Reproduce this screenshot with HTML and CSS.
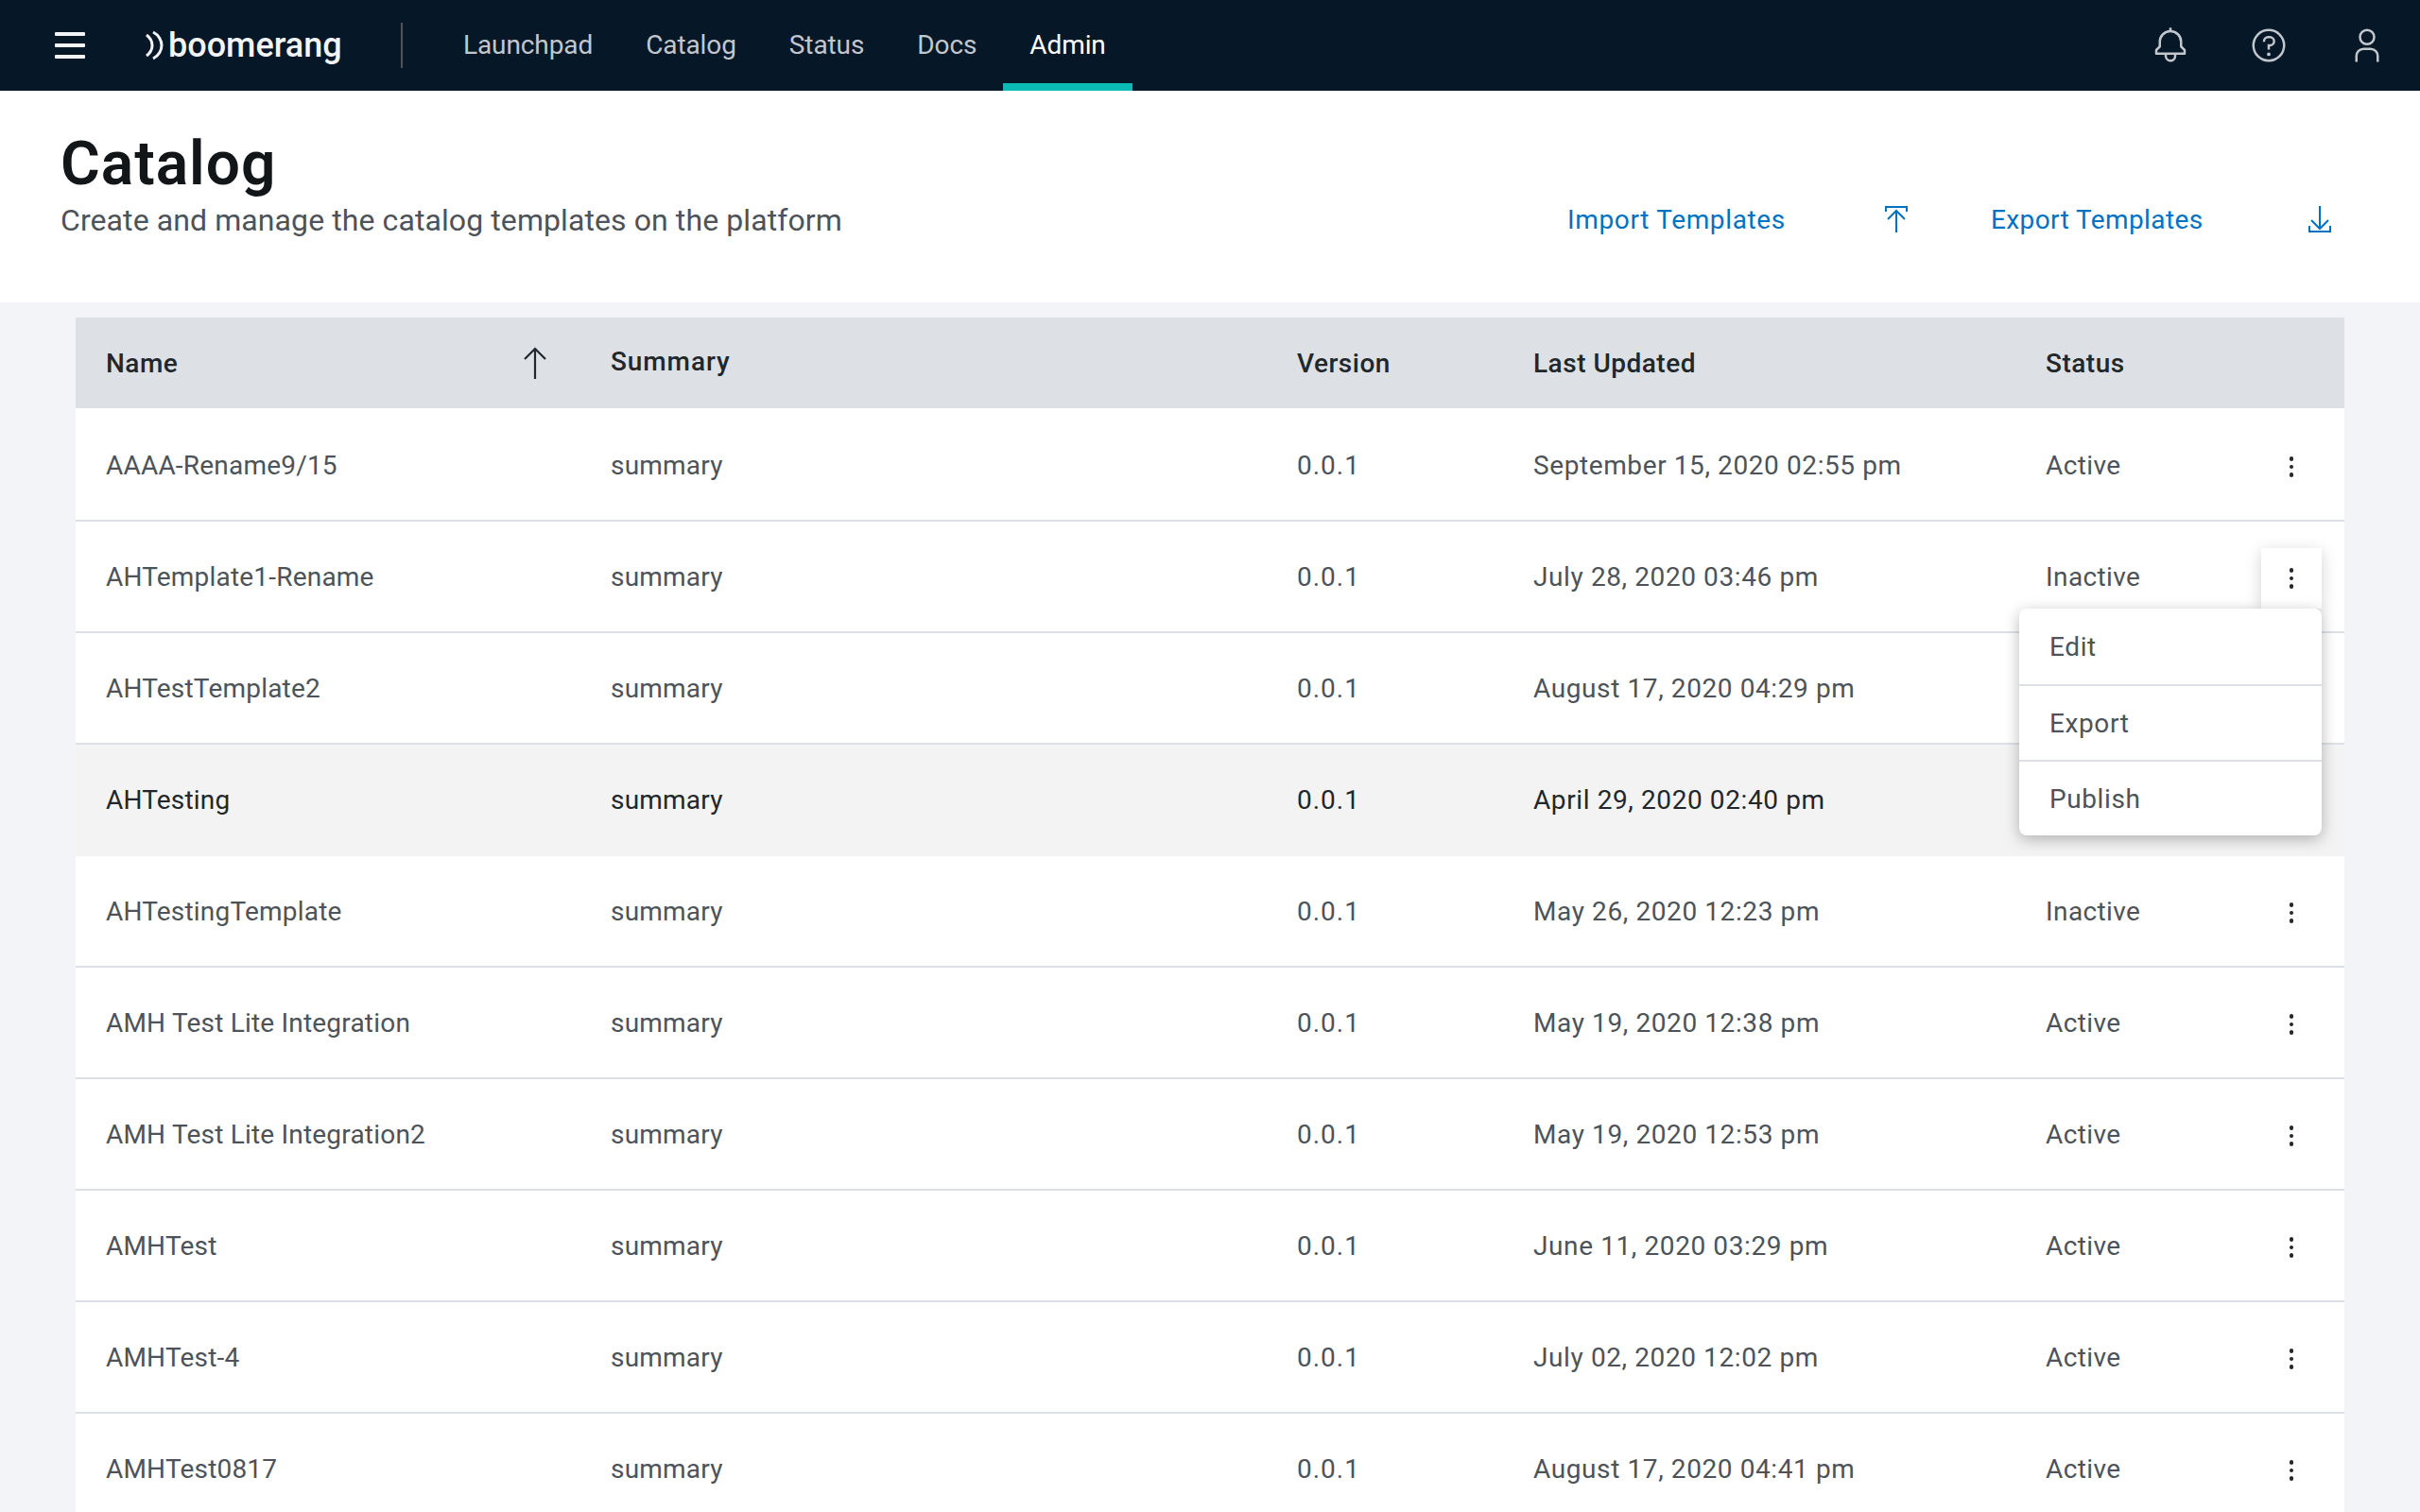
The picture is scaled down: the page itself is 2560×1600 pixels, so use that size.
FILE: index.html
```html
<!DOCTYPE html>
<html lang="en">
<head>
    <meta charset="UTF-8">
    <title>Catalog</title>
    <link rel="stylesheet" href="styles.css">
</head>
<body>
    <header class="topbar">
        <div class="burger"><span></span><span></span><span></span></div>
        <div class="logo">
            <svg class="logo-mark" viewBox="0 0 20 32"><path d="M2 5c4 3 6 7 6 11s-2 8-6 11M9 2c6 3 9 9 9 14s-3 11-9 14" fill="none" stroke="#f2f4f8" stroke-width="3"/></svg>
            <span>boomerang</span>
        </div>
        <nav class="nav">
            <a>Launchpad</a>
            <a>Catalog</a>
            <a>Status</a>
            <a>Docs</a>
            <a class="active">Admin</a>
        </nav>
        <div class="top-icons">
            <svg viewBox="0 0 32 32"><path d="M28.7071,19.293,26,16.5859V13a10.0136,10.0136,0,0,0-9-9.9492V1H15V3.0508A10.0136,10.0136,0,0,0,6,13v3.5859L3.2929,19.293A1,1,0,0,0,3,20v3a1,1,0,0,0,1,1h7v.7768a5.152,5.152,0,0,0,4.5,5.1987A5.0057,5.0057,0,0,0,21,25V24h7a1,1,0,0,0,1-1V20A1,1,0,0,0,28.7071,19.293ZM19,25a3,3,0,0,1-6,0V24h6Zm8-3H5V20.4141L7.707,17.707A1,1,0,0,0,8,17V13a8,8,0,0,1,16,0v4a1,1,0,0,0,.293.707L27,20.4141Z"/></svg>
            <svg viewBox="0 0 32 32"><path d="M16,2A14,14,0,1,0,30,16,14,14,0,0,0,16,2Zm0,26A12,12,0,1,1,28,16,12,12,0,0,1,16,28Z"/><circle cx="16" cy="23.5" r="1.5"/><path d="M17,8H15.5A4.49,4.49,0,0,0,11,12.5V13h2v-.5A2.5,2.5,0,0,1,15.5,10H17a2.5,2.5,0,0,1,0,5H15v4.5h2V17a4.5,4.5,0,0,0,0-9Z"/></svg>
            <svg viewBox="0 0 32 32"><path d="M16,4a5,5,0,1,1-5,5,5,5,0,0,1,5-5m0-2a7,7,0,1,0,7,7A7,7,0,0,0,16,2Z"/><path d="M26,30H24V25a5,5,0,0,0-5-5H13a5,5,0,0,0-5,5v5H6V25a7,7,0,0,1,7-7h6a7,7,0,0,1,7,7Z"/></svg>
        </div>
    </header>

    <section class="page-head">
        <div class="titles">
            <h1>Catalog</h1>
            <p>Create and manage the catalog templates on the platform</p>
        </div>
        <div class="head-actions">
            <a class="import">Import Templates
                <svg viewBox="0 0 24 28"><path d="M1 6V1h22v5M12 28V5M3 14l9-9 9 9" fill="none" stroke="#0072c3" stroke-width="2"/></svg>
            </a>
            <a class="export">Export Templates
                <svg viewBox="0 0 24 28"><path d="M1 21v6h22v-6M12 0v24M3 15l9 9 9-9" fill="none" stroke="#0072c3" stroke-width="2"/></svg>
            </a>
        </div>
    </section>

    <main class="content">
        <div class="table">
            <div class="row head">
                <div class="cell sort">Name
                    <svg viewBox="0 0 26 34"><path d="M13 34V2M2 13L13 2l11 11" fill="none" stroke="#21272a" stroke-width="2.2"/></svg>
                </div>
                <div class="cell summary-head">Summary</div>
                <div class="cell">Version</div>
                <div class="cell">Last Updated</div>
                <div class="cell">Status</div>
            </div>

            <div class="row">
                <div class="cell">AAAA-Rename9/15</div><div class="cell">summary</div><div class="cell">0.0.1</div>
                <div class="cell">September 15, 2020 02:55 pm</div><div class="cell">Active</div>
                <div class="actions"><button class="kebab"><i></i><i></i><i></i></button></div>
            </div>
            <div class="row">
                <div class="cell">AHTemplate1-Rename</div><div class="cell">summary</div><div class="cell">0.0.1</div>
                <div class="cell">July 28, 2020 03:46 pm</div><div class="cell">Inactive</div>
                <div class="actions">
                    <button class="kebab open"><i></i><i></i><i></i></button>
                    <ul class="menu">
                        <li>Edit</li>
                        <li>Export</li>
                        <li>Publish</li>
                    </ul>
                </div>
            </div>
            <div class="row">
                <div class="cell">AHTestTemplate2</div><div class="cell">summary</div><div class="cell">0.0.1</div>
                <div class="cell">August 17, 2020 04:29 pm</div><div class="cell"></div>
            </div>
            <div class="row hover">
                <div class="cell">AHTesting</div><div class="cell">summary</div><div class="cell">0.0.1</div>
                <div class="cell">April 29, 2020 02:40 pm</div><div class="cell"></div>
            </div>
            <div class="row after-hover">
                <div class="cell">AHTestingTemplate</div><div class="cell">summary</div><div class="cell">0.0.1</div>
                <div class="cell">May 26, 2020 12:23 pm</div><div class="cell">Inactive</div>
                <div class="actions"><button class="kebab"><i></i><i></i><i></i></button></div>
            </div>
            <div class="row">
                <div class="cell">AMH Test Lite Integration</div><div class="cell">summary</div><div class="cell">0.0.1</div>
                <div class="cell">May 19, 2020 12:38 pm</div><div class="cell">Active</div>
                <div class="actions"><button class="kebab"><i></i><i></i><i></i></button></div>
            </div>
            <div class="row">
                <div class="cell">AMH Test Lite Integration2</div><div class="cell">summary</div><div class="cell">0.0.1</div>
                <div class="cell">May 19, 2020 12:53 pm</div><div class="cell">Active</div>
                <div class="actions"><button class="kebab"><i></i><i></i><i></i></button></div>
            </div>
            <div class="row">
                <div class="cell">AMHTest</div><div class="cell">summary</div><div class="cell">0.0.1</div>
                <div class="cell">June 11, 2020 03:29 pm</div><div class="cell">Active</div>
                <div class="actions"><button class="kebab"><i></i><i></i><i></i></button></div>
            </div>
            <div class="row">
                <div class="cell">AMHTest-4</div><div class="cell">summary</div><div class="cell">0.0.1</div>
                <div class="cell">July 02, 2020 12:02 pm</div><div class="cell">Active</div>
                <div class="actions"><button class="kebab"><i></i><i></i><i></i></button></div>
            </div>
            <div class="row">
                <div class="cell">AMHTest0817</div><div class="cell">summary</div><div class="cell">0.0.1</div>
                <div class="cell">August 17, 2020 04:41 pm</div><div class="cell">Active</div>
                <div class="actions"><button class="kebab"><i></i><i></i><i></i></button></div>
            </div>
        </div>
    </main>
</body>
</html>
```

FILE: styles.css
```css
* {
    margin: 0;
    padding: 0;
    box-sizing: border-box;
    list-style: none;
}
html, body {
    height: 100%;
    overflow: hidden;
}
body {
    background: #f2f4f8;
    color: #4d5358;
    font-family: Roboto, "Liberation Sans", sans-serif;
    font-size: 28px;
    letter-spacing: 0.6px;
}

/* top bar */
.topbar {
    display: flex;
    align-items: center;
    height: 96px;
    background: #061727;
}
.burger {
    display: flex;
    flex-direction: column;
    gap: 8px;
    width: 32px;
    margin-left: 58px;
}
.burger span {
    height: 4px;
    border-radius: 1px;
    background: #f2f4f8;
}
.logo {
    display: flex;
    align-items: center;
    width: 273px;
    height: 48px;
    margin-left: 63px;
    border-right: 2px solid #4d5358;
    color: #f2f4f8;
    font-size: 36px;
    font-weight: 500;
    letter-spacing: 0;
}
.logo-mark {
    width: 20px;
    height: 32px;
    margin-right: 5px;
}
.nav {
    display: flex;
    height: 96px;
    margin-left: 36px;
    letter-spacing: -0.1px;
}
.nav a {
    display: flex;
    align-items: center;
    padding: 0 28px 2px;
    color: #c1c7cd;
}
.nav a.active {
    color: #fff;
    border-bottom: 8px solid #0abab5;
    padding-top: 6px;
    padding-bottom: 0;
}
.top-icons {
    display: flex;
    gap: 64px;
    margin-left: auto;
    margin-right: 36px;
}
.top-icons svg {
    width: 40px;
    height: 40px;
    fill: #c1c7cd;
}

/* page title */
.page-head {
    display: flex;
    justify-content: space-between;
    align-items: flex-end;
    height: 224px;
    padding: 39px 0 0 64px;
    background: #fff;
}
.titles {
    height: 185px;
}
.titles h1 {
    color: #121619;
    font-size: 64px;
    font-weight: 600;
    line-height: 77px;
    letter-spacing: 1px;
}
.titles p {
    font-size: 32px;
    line-height: 42px;
    letter-spacing: 0.09px;
}
.head-actions {
    display: flex;
    gap: 88px;
    margin-bottom: 68px;
    margin-right: 94px;
    color: #0072c3;
}
.head-actions a {
    display: flex;
    align-items: center;
    justify-content: space-between;
    height: 40px;
}
.head-actions svg {
    width: 24px;
    height: 28px;
}
.import {
    width: 360px;
    letter-spacing: 0.65px;
}
.export {
    width: 360px;
    letter-spacing: 0.4px;
}

/* table */
.content {
    padding: 16px 80px 0;
}
.row {
    display: grid;
    grid-template-columns: 534px 726px 250px 542px 1fr;
    position: relative;
    height: 118px;
    border-top: 2px solid #dde1e6;
    background: #fff;
}
.row .cell:nth-child(1),
.row .cell:nth-child(2) {
    letter-spacing: 0.2px;
}
.row .cell:nth-child(3) {
    letter-spacing: 1px;
}
.row .cell:nth-child(5) {
    letter-spacing: 0.4px;
}
.row.head {
    height: 96px;
    border-top: 0;
    background: #dde1e6;
    color: #21272a;
    font-weight: 500;
}
.row.head .cell {
    letter-spacing: 0.5px;
}
.row.head .summary-head {
    letter-spacing: 0.9px;
}
.row.head + .row {
    border-top-color: #fff;
}
.row.hover {
    background: #f3f3f3;
    color: #21272a;
}
.row.after-hover {
    border-top-color: #f3f3f3;
}
.cell {
    display: flex;
    align-items: center;
    padding-left: 32px;
}
.sort {
    justify-content: space-between;
    padding-right: 35px;
}
.sort svg {
    width: 26px;
    height: 34px;
}
.summary-head {
    padding-bottom: 4px;
}
.actions {
    position: absolute;
    right: 24px;
    top: 28px;
    width: 64px;
    height: 64px;
}
.kebab {
    display: flex;
    flex-direction: column;
    align-items: center;
    justify-content: center;
    gap: 4px;
    width: 64px;
    height: 64px;
    border: 0;
    background: transparent;
}
.kebab i {
    width: 4.5px;
    height: 4.5px;
    border-radius: 50%;
    background: #21272a;
}
.kebab.open {
    position: relative;
    z-index: 3;
    background: #fff;
    box-shadow: 0 4px 16px rgba(0, 0, 0, .18);
}
.menu {
    position: absolute;
    top: 64px;
    right: 0;
    z-index: 4;
    width: 320px;
    background: #fff;
    border-radius: 8px;
    box-shadow: 0 4px 16px rgba(0, 0, 0, .28);
}
.menu li {
    display: flex;
    align-items: center;
    height: 80px;
    padding-left: 32px;
    border-bottom: 2px solid #dde1e6;
}
.menu li:first-child {
    height: 82px;
}
.menu li:last-child {
    height: 78px;
    border-bottom: 0;
}
```
